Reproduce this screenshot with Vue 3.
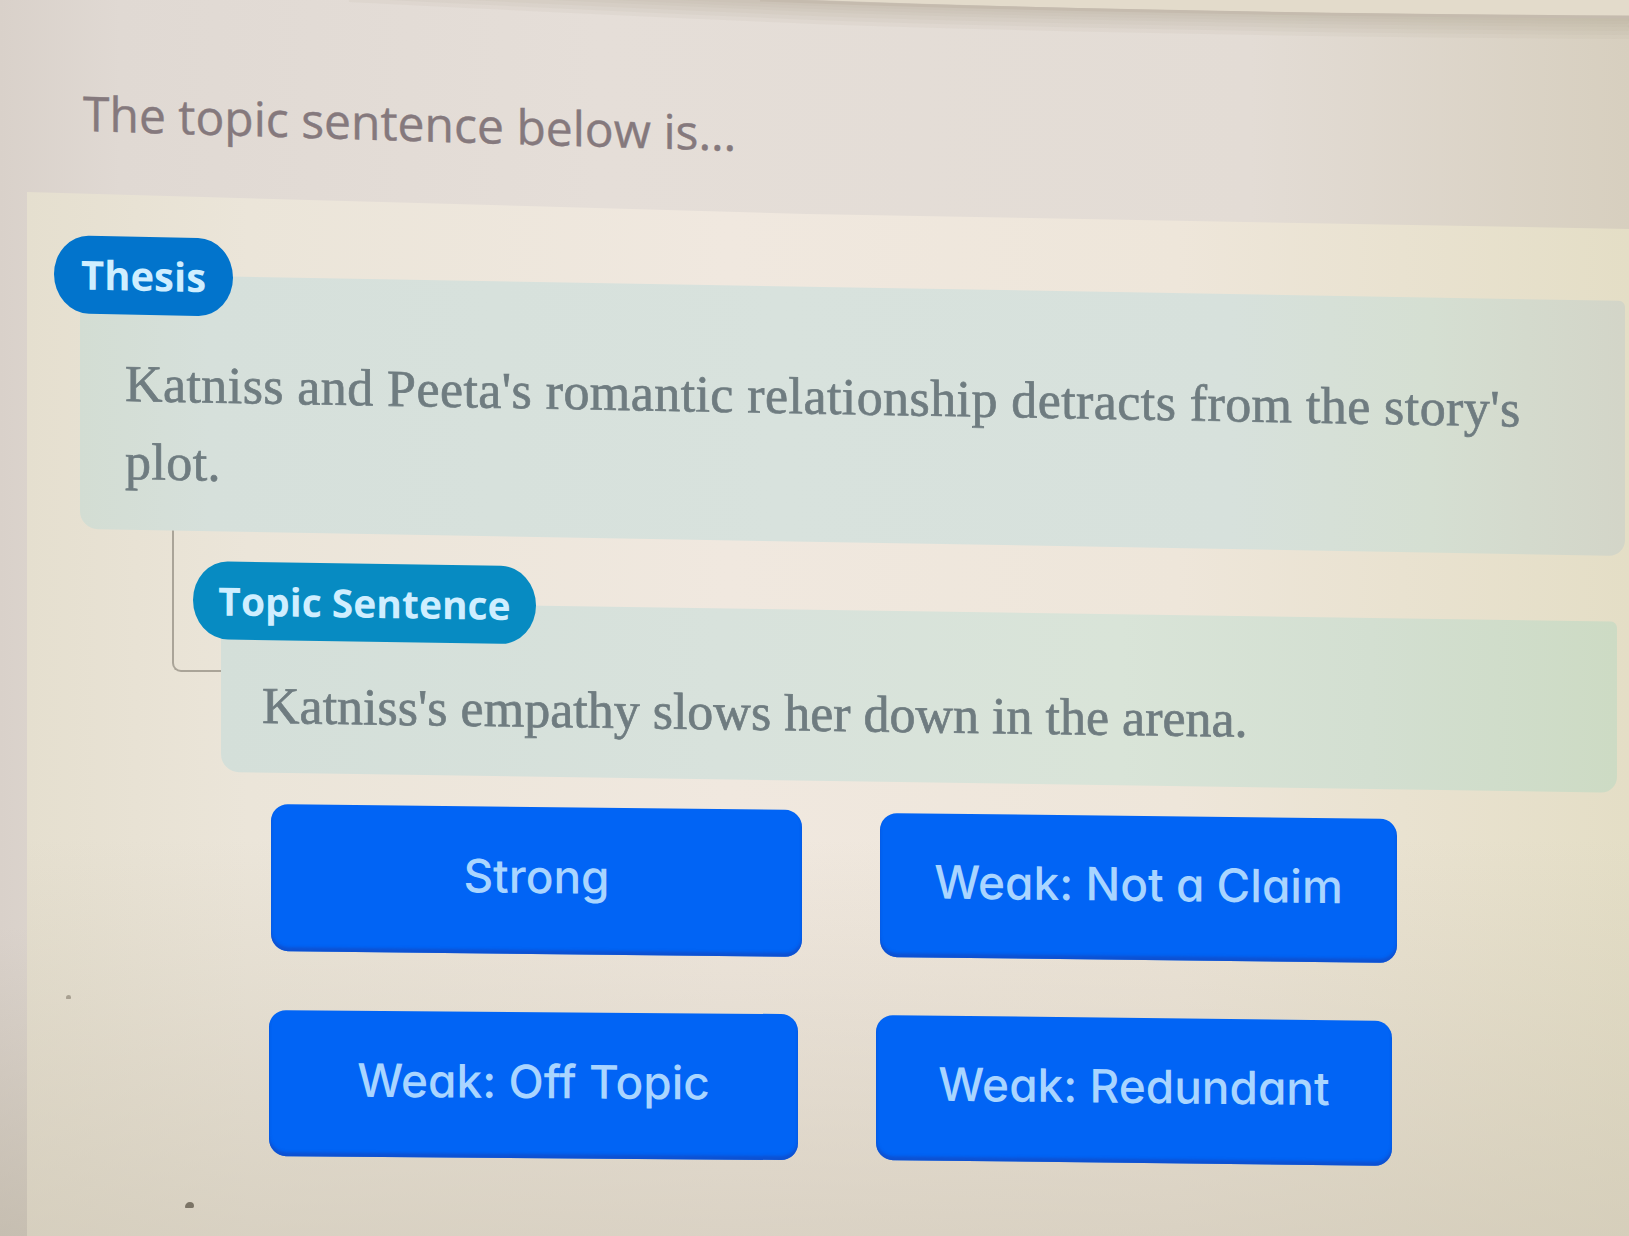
<script setup>
import { ref } from 'vue';

const thesis = "Katniss and Peeta's romantic relationship detracts from the story's plot.";
const topicSentence = "Katniss's empathy slows her down in the arena.";

// Answer choices, in reading order
const choices = [
    { id: 'strong', label: 'Strong' },
    { id: 'not-a-claim', label: 'Weak: Not a Claim' },
    { id: 'off-topic', label: 'Weak: Off Topic' },
    { id: 'redundant', label: 'Weak: Redundant' }
];

// Stroke widths that stack into the soft shadow under the top bar
const shadowWidths = [8, 14, 20, 28, 36, 44];

const selected = ref(null);

function choose(id) {
    selected.value = id;
}
</script>

<template>
    <div class="page">
        <header class="question">
            <svg class="top-edge" viewBox="0 0 1629 50">
                <path
                    v-for="width in shadowWidths"
                    :key="width"
                    d="M350 -20Q600 -7 815 2Q1150 14 1629 17"
                    fill="none"
                    stroke="#b3a99d"
                    stroke-opacity="0.11"
                    :stroke-width="width" />
                <path d="M780 0H815Q1150 13 1629 16V0Z" fill="#e3dbcb" />
                <path d="M760 0L815 2Q1150 14 1629 17" fill="none" stroke="#c5bbae" stroke-width="3" />
            </svg>
            <h1 class="question-text">The topic sentence below is...</h1>
        </header>

        <main class="panel">
            <section class="card thesis">
                <span class="tag"><b>Thesis</b></span>
                <p class="card-text">{{ thesis }}</p>
            </section>

            <div class="branch">
                <div class="connector"></div>
                <section class="card topic">
                    <span class="tag"><b>Topic Sentence</b></span>
                    <p class="card-text">{{ topicSentence }}</p>
                </section>
            </div>

            <div class="choices">
                <button
                    v-for="choice in choices"
                    :key="choice.id"
                    class="choice"
                    :class="[choice.id, { selected: choice.id === selected }]"
                    @click="choose(choice.id)">
                    <span>{{ choice.label }}</span>
                </button>
            </div>
            <i class="speck small"></i>
            <i class="speck"></i>
        </main>
    </div>
</template>

<style>
body {
    margin: 0;
    overflow: hidden;
}
</style>

<style scoped>
.page {
    position: relative;
    display: flex;
    flex-direction: column;
    width: 1629px;
    height: 1236px;
    overflow: hidden;
    background:
        linear-gradient(180deg, rgba(190, 182, 166, 0) 75%, rgba(190, 182, 166, 0.7) 100%),
        linear-gradient(90deg, #d9d1ca 0, #e0d9d3 120px, #e5ded8 600px, #e3dcd5 1250px, #d7cfbf 1629px);
    font-family: 'Open Sans', 'Noto Sans', sans-serif;
}

/* Heading band */
.question {
    flex: none;
    height: 192px;
    box-sizing: border-box;
    padding: 79px 0 0 83px;
}

.top-edge {
    position: absolute;
    top: 0;
    left: 0;
    width: 1629px;
    height: 50px;
}

.question-text {
    position: relative;
    width: max-content;
    margin: 0;
    font-size: 48px;
    line-height: 68px;
    font-weight: 400;
    color: #85797d;
    -webkit-text-stroke: 0.4px #85797d;
    transform: skewY(1.75deg);
    transform-origin: 0 50%;
}

/* Panel */
.panel {
    position: relative;
    flex: 1;
    margin-left: 27px;
    box-sizing: border-box;
    padding: 82px 0 0 53px;
    background:
        linear-gradient(180deg, rgba(205, 197, 180, 0) 62%, rgba(205, 197, 180, 0.62) 100%),
        linear-gradient(90deg, #e5dfcf 0, #ebe5d9 220px, #f0e8df 700px, #eee6da 1150px, #e4dec6 1602px);
    clip-path: polygon(0 0, 780px 22px, 1602px 37px, 1602px 100%, 0 100%);
}

.card {
    position: relative;
    z-index: 0;
    box-sizing: border-box;
}

.card::before {
    content: '';
    position: absolute;
    z-index: -1;
    inset: 0;
    transform-origin: 0 0;
    border-radius: 4px 6px 16px 18px;
}

.thesis {
    width: 1545px;
    height: 255px;
    padding: 71px 50px 0 45px;
}

.thesis::before {
    background: linear-gradient(90deg, #d3ddd3 0, #d6e0db 130px, #d8e2dd 700px, #d7e1dc 1150px, #d5dfd2 1350px, #d3d5c8 1545px);
    transform: skewY(1deg);
}

.card-text {
    margin: 0;
    font-family: 'Liberation Serif', serif;
    font-size: 52px;
    line-height: 78px;
    color: #6f7c80;
    -webkit-text-stroke: 0.7px #6f7c80;
    transform-origin: 0 0;
}

.thesis .card-text {
    letter-spacing: 0.42px;
    transform: skewY(1.05deg);
}

.tag {
    position: absolute;
    display: flex;
    align-items: center;
    justify-content: center;
    box-sizing: border-box;
    height: 78px;
    padding-bottom: 2px;
    border-radius: 35px / 39px;
    font-size: 39px;
    color: #cfeeff;
    transform-origin: 0 0;
}

.tag b {
    font-weight: 700;
}

.thesis .tag {
    left: -26px;
    top: -39px;
    width: 179px;
    background: #0274cc;
    transform: skewY(1.2deg);
}

.thesis .tag b {
    font-size: 40px;
}

/* Topic sentence hangs off the thesis */
.branch {
    display: flex;
    padding-left: 92px;
}

.connector {
    width: 49px;
    height: 143px;
    box-sizing: border-box;
    border-left: 2px solid #aaa498;
    border-bottom: 2px solid #aaa498;
    border-bottom-left-radius: 9px;
}

.topic {
    width: 1396px;
    height: 171px;
    margin-top: 72px;
    padding: 66px 40px 0 41px;
}

.topic::before {
    background: linear-gradient(90deg, #d4dfd9 0, #d8e2dc 500px, #d9e4d8 900px, #d3dfd1 1150px, #cddbc4 1396px);
    transform: skewY(0.85deg);
}

.topic .card-text {
    transform: skewY(0.8deg);
}

.topic .tag {
    left: -28px;
    top: -40px;
    width: 343px;
    background: #078bc2;
    transform: skewY(0.9deg);
}

/* Answer buttons */
.choices {
    display: grid;
    grid-template-columns: 531px 517px;
    grid-template-rows: 147px 146px;
    column-gap: 78px;
    row-gap: 59px;
    margin: 32px 0 0 191px;
}

.choice {
    box-sizing: border-box;
    padding: 0 0 9px;
    border: 0;
    border-radius: 17px;
    background: #0164f5;
    box-shadow: inset 0 -4px 3px rgba(20, 70, 190, 0.65);
    font-family: Inter, 'Open Sans', sans-serif;
    font-feature-settings: 'cv11';
    font-size: 46px;
    font-weight: 500;
    color: #a9d5ff;
    cursor: pointer;
    transform: skewY(0.65deg);
    transform-origin: 0 0;
}

.choice.selected {
    background: #0050d0;
}

.not-a-claim {
    margin-top: 9px;
    margin-bottom: -6px;
}

.off-topic {
    margin-left: -2px;
    margin-right: 4px;
    transform: skewY(0.45deg);
}

.redundant {
    margin: 5px 5px -4px -4px;
}

/* Dust marks on the background */
.speck {
    position: absolute;
    left: 158px;
    top: 1010px;
    width: 9px;
    height: 6px;
    border-radius: 6px 5px 2px 1px;
    background: #7b7466;
}

.speck.small {
    left: 39px;
    top: 803px;
    width: 5px;
    height: 4px;
    background: #a8a091;
}
</style>
